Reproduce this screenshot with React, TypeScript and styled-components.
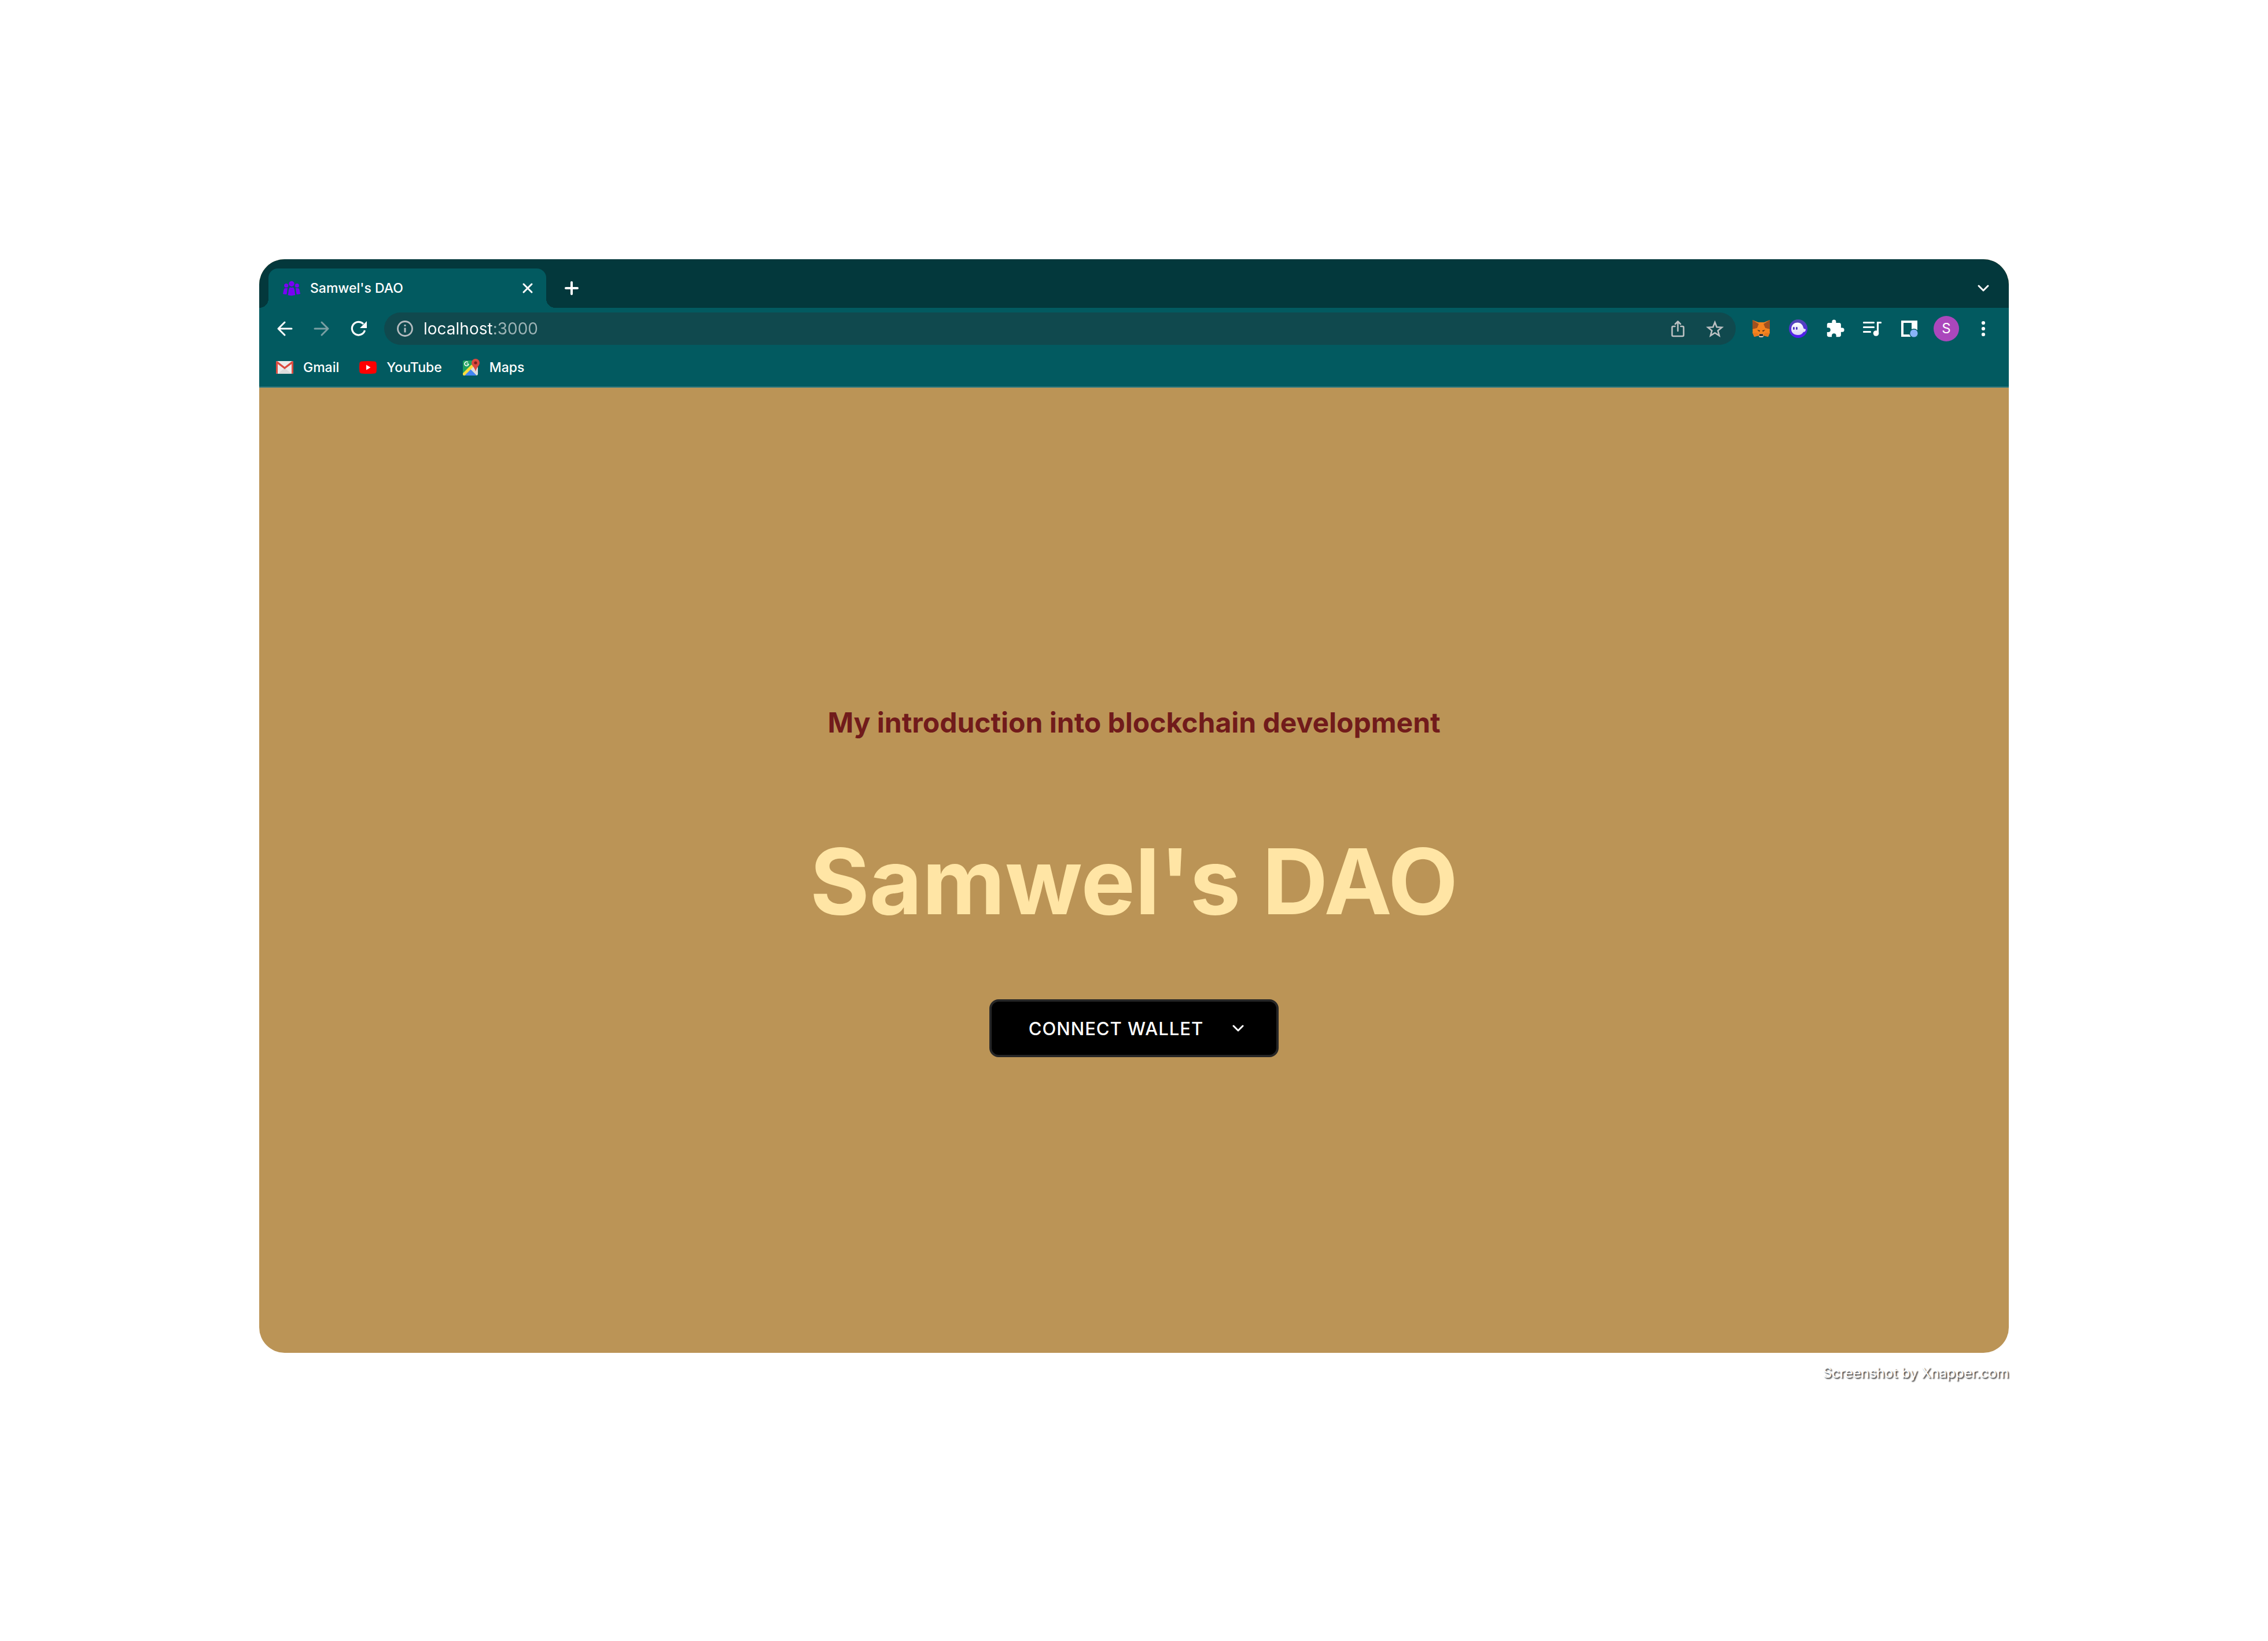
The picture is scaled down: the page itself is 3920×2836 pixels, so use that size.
import React from "react";
import styled, { createGlobalStyle } from "styled-components";

const GlobalStyle = createGlobalStyle`
  * { box-sizing: border-box; }
  body {
    margin: 0;
    background: #ffffff;
    font-family: Inter, "Liberation Sans", sans-serif;
  }
  button { font: inherit; border: 0; background: none; padding: 0; cursor: pointer; }
  svg { display: block; }
`;

const Page = styled.main`
  display: flex;
  flex-direction: column;
  min-height: 100vh;
  padding: 448px;
`;

const BrowserWindow = styled.section`
  flex: 1;
  display: flex;
  flex-direction: column;
  overflow: hidden;
  border-radius: 44px;
  background: #bb9456;
`;

const TabStrip = styled.div`
  display: flex;
  align-items: flex-end;
  height: 84px;
  padding: 0 10px 0 16px;
  background: #03383c;
`;

const Tab = styled.div`
  position: relative;
  display: flex;
  align-items: center;
  gap: 16px;
  width: 480px;
  height: 68px;
  padding: 0 20px 0 24px;
  border-radius: 16px 16px 0 0;
  background: #025a60;

  &::before,
  &::after {
    content: "";
    position: absolute;
    bottom: 0;
    width: 16px;
    height: 16px;
  }
  &::before {
    right: 100%;
    background: radial-gradient(circle at 0 0, transparent 16px, #025a60 16px);
  }
  &::after {
    left: 100%;
    background: radial-gradient(circle at 100% 0, transparent 16px, #025a60 16px);
  }
`;

const TabTitle = styled.span`
  flex: 1;
  font-size: 23px;
  font-weight: 500;
  line-height: 32px;
  color: #ffffff;
`;

const IconButton = styled.button<{ $size?: number; $color?: string }>`
  display: flex;
  align-items: center;
  justify-content: center;
  flex: none;
  width: ${(p) => p.$size ?? 64}px;
  height: ${(p) => p.$size ?? 64}px;
  color: ${(p) => p.$color ?? "#ffffff"};
`;

const StripButton = styled(IconButton)`
  margin-left: 10px;
`;

const StripEnd = styled(IconButton)`
  margin-left: auto;
`;

const Toolbar = styled.div`
  display: flex;
  align-items: center;
  height: 72px;
  padding: 0 12px;
  background: #025a60;
`;

const AddressBar = styled.form`
  flex: 1;
  display: flex;
  align-items: center;
  height: 56px;
  margin: 0 12px;
  padding: 0 4px 0 20px;
  border-radius: 28px;
  background: #10494e;
`;

const AddressInput = styled.input`
  flex: 1;
  min-width: 0;
  margin-left: 16px;
  padding: 0;
  border: 0;
  outline: 0;
  font: inherit;
  font-size: 28px;
  line-height: 40px;
  color: #ffffff;
  background: linear-gradient(90deg, #ffffff 120px, #9db4b6 120px);
  background-clip: text;
  -webkit-text-fill-color: transparent;
`;

const Avatar = styled.span`
  width: 44px;
  height: 44px;
  border-radius: 50%;
  background: #ab47bc;
  color: #ffffff;
  font-size: 24px;
  font-weight: 400;
  line-height: 44px;
  text-align: center;
`;

const Bookmarks = styled.nav`
  display: flex;
  align-items: center;
  gap: 34px;
  height: 66px;
  padding: 0 28px 2px;
  border-bottom: 2px solid #37797e;
  background: #025a60;
`;

const Bookmark = styled.a`
  display: flex;
  align-items: center;
  gap: 16px;
  font-size: 23px;
  font-weight: 500;
  line-height: 32px;
  color: #ffffff;
  text-decoration: none;
`;

const Hero = styled.div`
  flex: 1;
  display: flex;
  flex-direction: column;
  align-items: center;
  justify-content: center;
  padding-top: 38px;
  text-align: center;
`;

const Tagline = styled.p`
  margin: 0 0 144px;
  font-size: 48px;
  font-weight: 700;
  line-height: 60px;
  color: #711b1b;
`;

const Title = styled.h1`
  margin: 0 0 104px;
  font-size: 157px;
  font-weight: 700;
  line-height: 200px;
  color: #ffe5a5;
`;

const WalletButton = styled.button`
  && {
    display: flex;
    align-items: center;
    gap: 46px;
    height: 100px;
    padding: 0 52px 0 64px;
    border: 4px solid #262626;
    border-radius: 16px;
    background: #000000;
    color: #ffffff;
    font-size: 31px;
    font-weight: 500;
    letter-spacing: 1px;
  }
`;

const Credit = styled.footer`
  padding-top: 20px;
  font-size: 24px;
  font-weight: 400;
  line-height: 30px;
  text-align: right;
  color: #ffffff;
  text-shadow: 2px 2px 2px rgba(0, 0, 0, 0.8);
`;

type StrokeProps = { size: number; d: string; width?: number };

const Stroke = ({ size, d, width = 3 }: StrokeProps) => (
  <svg width={size} height={size} viewBox={`0 0 ${size} ${size}`} fill="none" stroke="currentColor" strokeWidth={width} strokeLinecap="round" strokeLinejoin="round" aria-hidden="true">
    <path d={d} />
  </svg>
);

const PeopleIcon = () => (
  <svg width="32" height="32" viewBox="0 0 32 32" fill="#7a00f5" aria-hidden="true">
    <circle cx="16" cy="8.500" r="4.700" />
    <circle cx="6.700" cy="11.500" r="3.600" />
    <circle cx="25.300" cy="11.500" r="3.600" />
    <path d="M9.700 28l1.300-9q.6-4 3-4.500 2 1 4 0 2.400.5 3 4.500l1.300 9q-6.300 1.800-12.600 0zM1 26l1.500-7.500q.6-2.500 2.500-2.500h4l-1.500 10.500q-3.500.5-6.500-.5zM31 26l-1.500-7.500q-.6-2.500-2.500-2.500h-4l1.500 10.500q3.500.5 6.500-.5z" />
  </svg>
);

const ReloadIcon = () => (
  <svg width="32" height="32" viewBox="0 0 32 32" aria-hidden="true">
    <path d="M26.500 19A11.300 11.300 0 1 1 24 8" fill="none" stroke="currentColor" strokeWidth="3.200" />
    <path d="M30 3v12H18z" fill="currentColor" />
  </svg>
);

const InfoIcon = () => (
  <svg width="32" height="32" viewBox="0 0 32 32" aria-hidden="true">
    <circle cx="16" cy="16" r="12.500" fill="none" stroke="currentColor" strokeWidth="2.800" />
    <path d="M14.500 9h3v3h-3zM14.500 14.500h3v8h-3z" fill="currentColor" />
  </svg>
);

const ShareIcon = () => (
  <svg width="32" height="32" viewBox="0 0 32 32" fill="none" stroke="currentColor" strokeWidth="2.600" strokeLinecap="round" strokeLinejoin="round" aria-hidden="true">
    <path d="M11 12H8q-2 0-2 2v13q0 2 2 2h16q2 0 2-2V14q0-2-2-2h-3M16 20V4M11.500 8L16 3.500 20.500 8" />
  </svg>
);

const StarIcon = () => (
  <svg width="32" height="32" viewBox="0 0 32 32" fill="none" stroke="currentColor" strokeWidth="2.600" aria-hidden="true">
    <path d="M16 5l3.200 8.200 8.800.6-6.800 5.600 2.300 8.600L16 23.200 8.500 28l2.300-8.600L4 13.800l8.800-.6z" />
  </svg>
);

const FoxIcon = () => (
  <svg width="32" height="32" viewBox="0 0 32 32" aria-hidden="true">
    <path d="M1 1l10 4h10l10-4-1 15 1 7-3 7-8-2-2 3h-4l-2-3-8 2-3-7 1-7z" fill="#f5841f" />
    <path d="M1 1l11 7-3 7-8 2zM31 1L20 8l3 7 8 2z" fill="#a1511f" />
    <path d="M1 17l8-2 3-7h8l3 7 8 2-1 5H2z" fill="#f5841f" />
    <path d="M1 23h8l3 5-8 2zM31 23h-8l-3 5 8 2z" fill="#e8791f" />
    <path d="M9 18l5 1-1 2.500zM23 18l-5 1 1 2.500z" fill="#4a3020" />
    <path d="M12 27l1.500-2h5l1.500 2v3l-2 1h-4l-2-1z" fill="#d7c1b3" />
    <path d="M13 25.500h6l.5 3h-7z" fill="#161616" />
  </svg>
);

const GhostIcon = () => (
  <svg width="32" height="32" viewBox="0 0 32 32" aria-hidden="true">
    <defs>
      <linearGradient id="ghost-bg" x1="0" y1="0" x2="0" y2="1">
        <stop offset="0" stopColor="#534bb1" />
        <stop offset="1" stopColor="#5118f5" />
      </linearGradient>
      <linearGradient id="ghost-body" x1="0" y1="0" x2="0" y2="1">
        <stop offset="0" stopColor="#ffffff" />
        <stop offset="1" stopColor="#d9d4f3" />
      </linearGradient>
    </defs>
    <circle cx="16" cy="16" r="16" fill="url(#ghost-bg)" />
    <path d="M4 17C4 10 8.500 5.500 15 5.500c5.500 0 9 4 10 9 .4 1.800 1.500 2.300 4 2.200.3 3.300-1.500 5-4 5C23 25 20 27 15.500 27 9 27 4 23 4 17z" fill="url(#ghost-body)" />
    <rect x="7" y="13" width="2.800" height="5" rx="1.400" fill="#4c32bd" />
    <rect x="12" y="13" width="2.800" height="5" rx="1.400" fill="#4c32bd" />
  </svg>
);

const PuzzleIcon = () => (
  <svg width="34" height="34" viewBox="0 0 24 24" fill="currentColor" aria-hidden="true">
    <path d="M20.500 11H19V7c0-1.100-.9-2-2-2h-4V3.500a2.500 2.500 0 0 0-5 0V5H4c-1.100 0-2 .9-2 2v3.800h1.500a2.700 2.700 0 0 1 0 5.400H2V20c0 1.100.9 2 2 2h3.800v-1.500a2.700 2.700 0 0 1 5.400 0V22H17c1.100 0 2-.9 2-2v-4h1.500a2.500 2.500 0 0 0 0-5z" />
  </svg>
);

const QueueIcon = () => (
  <svg width="32" height="32" viewBox="0 0 32 32" aria-hidden="true">
    <path d="M1.500 5.500h17M1.500 13.500h17M1.500 21.500h11M25.500 25V5.500h5" fill="none" stroke="currentColor" strokeWidth="3.200" strokeLinecap="round" />
    <circle cx="22.500" cy="24" r="4.800" fill="currentColor" />
  </svg>
);

const SidePanelIcon = () => (
  <svg width="32" height="32" viewBox="0 0 32 32" aria-hidden="true">
    <path d="M2 2h28v28H2zM6 6v20h14V6z" fill="currentColor" fillRule="evenodd" />
    <circle cx="24" cy="24" r="8" fill="#025a60" />
    <circle cx="24" cy="24" r="6.600" fill="#8ab4f8" />
  </svg>
);

const DotsIcon = () => (
  <svg width="32" height="32" viewBox="0 0 32 32" fill="currentColor" aria-hidden="true">
    <circle cx="16" cy="6" r="3.100" />
    <circle cx="16" cy="16" r="3.100" />
    <circle cx="16" cy="26" r="3.100" />
  </svg>
);

const GmailIcon = () => (
  <svg width="32" height="32" viewBox="0 0 32 32" aria-hidden="true">
    <rect x="1" y="5" width="30" height="22" rx="2" fill="#ececec" />
    <path d="M4 27l12-10 12 10z" fill="#dcdcdc" />
    <path d="M1 7q0-2 2-2l13 10L29 5q2 0 2 2v18q0 2-2 2h-1V10L16 19 4 10v17H3q-2 0-2-2z" fill="#dc4a3f" />
  </svg>
);

const YouTubeIcon = () => (
  <svg width="32" height="32" viewBox="0 0 32 32" aria-hidden="true">
    <path d="M5 5.500q11-1 22 0 3.500.3 3.700 4 .6 6.500 0 13-.2 3.700-3.700 4-11 1-22 0-3.500-.3-3.700-4-.6-6.500 0-13 .2-3.700 3.700-4z" fill="#ff0000" />
    <path d="M13 11.500v9l7.500-4.500z" fill="#ffffff" />
  </svg>
);

const MapsIcon = () => (
  <svg width="32" height="32" viewBox="0 0 32 32" aria-hidden="true">
    <rect x="2" y="4" width="26" height="26" rx="2" fill="#1fa15f" />
    <path d="M4 30l11-11 11 11z" fill="#4285f4" />
    <path d="M15 19l7-7 6 4v12l-2 2z" fill="#dedede" />
    <path d="M2 26L17 11l3.500 3.500L5 30q-3 0-3-2z" fill="#fddc3c" />
    <path d="M12 10H8.500M11 7.300A3.500 3.500 0 1 0 12 10" fill="none" stroke="#ffffff" strokeWidth="1.600" />
    <path d="M24 1a7 7 0 0 1 7 7c0 5-5 7-7 15-2-8-7-10-7-15a7 7 0 0 1 7-7z" fill="#dc4a3f" />
    <circle cx="24" cy="8" r="2.600" fill="#7a231d" />
  </svg>
);

const extensions = [
  { label: "MetaMask", icon: <FoxIcon /> },
  { label: "Phantom", icon: <GhostIcon /> },
  { label: "Extensions", icon: <PuzzleIcon /> },
  { label: "Media controls", icon: <QueueIcon /> },
  { label: "Side panel", icon: <SidePanelIcon /> },
  { label: "Profile", icon: <Avatar>S</Avatar> },
  { label: "Menu", icon: <DotsIcon /> },
];

const bookmarks = [
  { label: "Gmail", href: "#gmail", icon: <GmailIcon /> },
  { label: "YouTube", href: "#youtube", icon: <YouTubeIcon /> },
  { label: "Maps", href: "#maps", icon: <MapsIcon /> },
];

export default function App() {
  return (
    <>
      <GlobalStyle />
      <Page>
        <BrowserWindow>
          <TabStrip>
            <Tab>
              <PeopleIcon />
              <TabTitle>Samwel's DAO</TabTitle>
              <IconButton $size={24} aria-label="Close tab">
                <Stroke size={24} d="M5 5l14 14M19 5L5 19" />
              </IconButton>
            </Tab>
            <StripButton $size={68} aria-label="New tab">
              <Stroke size={32} width={4} d="M16 6v20M6 16h20" />
            </StripButton>
            <StripEnd $size={68} aria-label="Search tabs">
              <Stroke size={32} d="M8 12l8 8 8-8" />
            </StripEnd>
          </TabStrip>
          <Toolbar>
            <IconButton aria-label="Back">
              <Stroke size={32} d="M28 16H5M16 5L5 16l11 11" />
            </IconButton>
            <IconButton aria-label="Forward" $color="#7a9fa3">
              <Stroke size={32} d="M4 16h23M16 5l11 11-11 11" />
            </IconButton>
            <IconButton aria-label="Reload">
              <ReloadIcon />
            </IconButton>
            <AddressBar onSubmit={(e) => e.preventDefault()}>
              <IconButton $size={32} $color="#b5bcc0" type="button" aria-label="Site information">
                <InfoIcon />
              </IconButton>
              <AddressInput aria-label="Address" defaultValue="localhost:3000" spellCheck={false} />
              <IconButton $color="#bdc1c3" type="button" aria-label="Share">
                <ShareIcon />
              </IconButton>
              <IconButton $color="#bdc1c3" type="button" aria-label="Bookmark this page">
                <StarIcon />
              </IconButton>
            </AddressBar>
            {extensions.map((item) => (
              <IconButton key={item.label} aria-label={item.label}>
                {item.icon}
              </IconButton>
            ))}
          </Toolbar>
          <Bookmarks>
            {bookmarks.map((item) => (
              <Bookmark key={item.label} href={item.href}>
                {item.icon}
                {item.label}
              </Bookmark>
            ))}
          </Bookmarks>
          <Hero>
            <Tagline>My introduction into blockchain development</Tagline>
            <Title>Samwel's DAO</Title>
            <WalletButton>
              CONNECT WALLET
              <Stroke size={28} width={3} d="M6 10l8 8 8-8" />
            </WalletButton>
          </Hero>
        </BrowserWindow>
        <Credit>Screenshot by Xnapper.com</Credit>
      </Page>
    </>
  );
}
